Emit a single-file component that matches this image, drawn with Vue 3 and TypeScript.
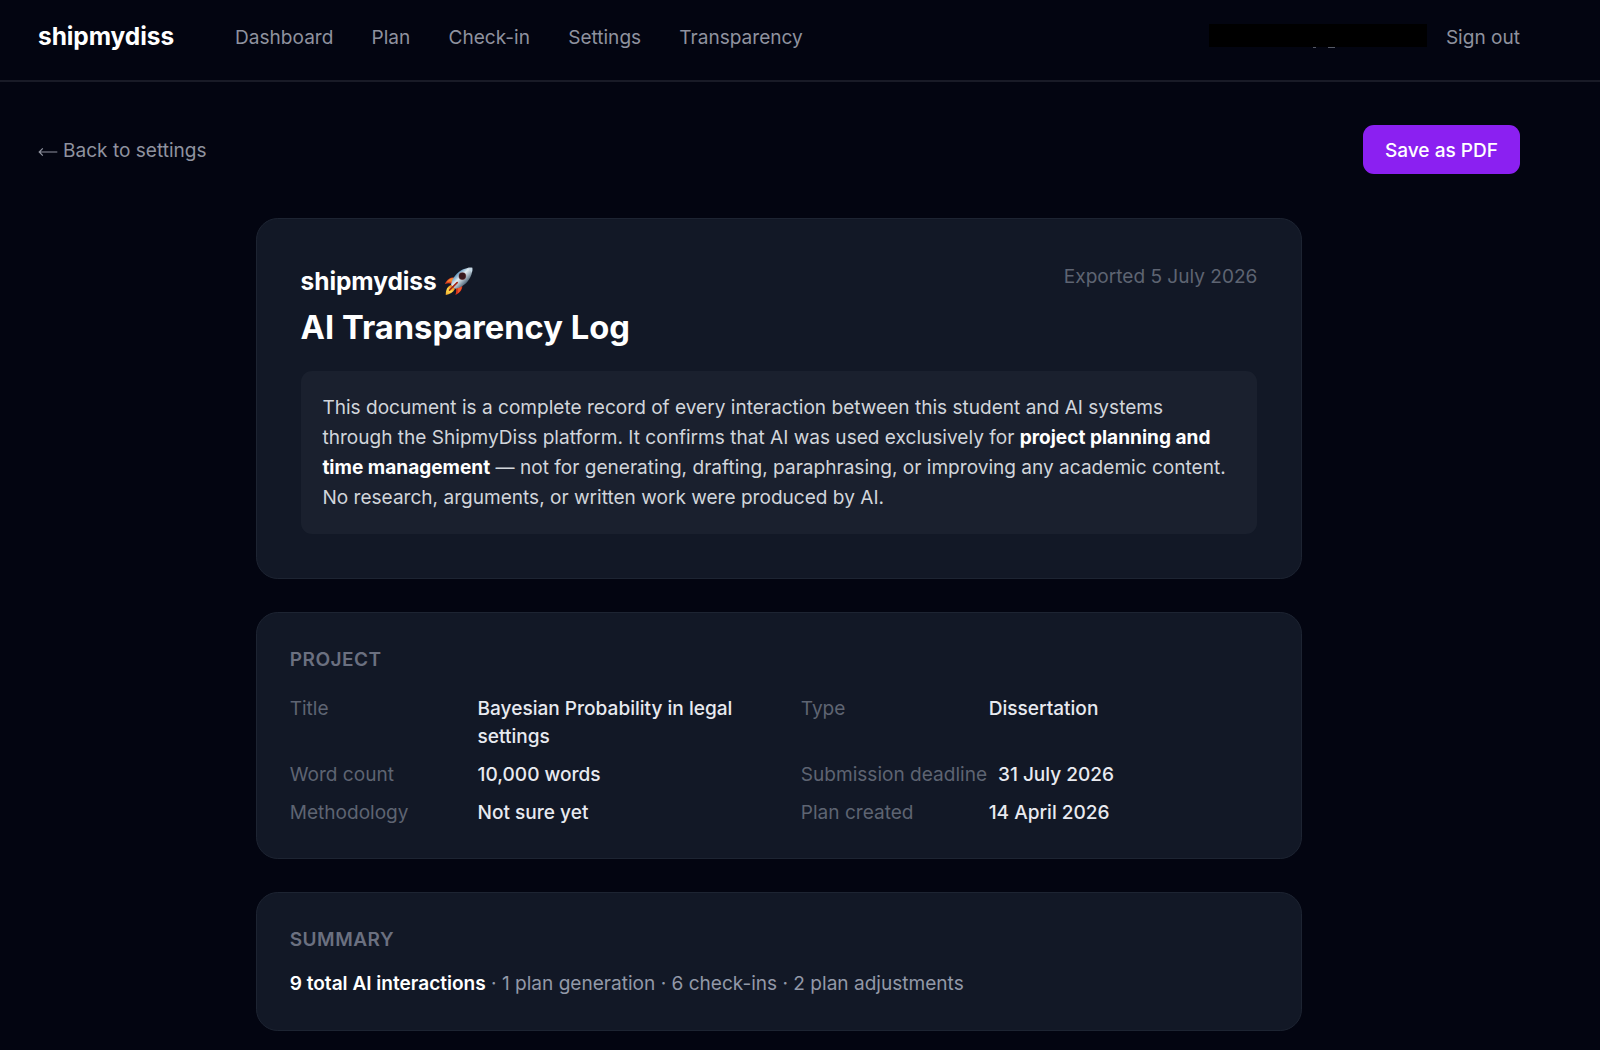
<script setup lang="ts">
interface Detail {
  label: string
  value: string
}

const navItems: string[] = ['Dashboard', 'Plan', 'Check-in', 'Settings', 'Transparency']

const details: Detail[] = [
  { label: 'Title', value: 'Bayesian Probability in legal settings' },
  { label: 'Type', value: 'Dissertation' },
  { label: 'Word count', value: '10,000 words' },
  { label: 'Submission deadline', value: '31 July 2026' },
  { label: 'Methodology', value: 'Not sure yet' },
  { label: 'Plan created', value: '14 April 2026' },
]
</script>

<template>
  <div class="page">
    <header class="topbar">
      <div class="topbar-inner">
        <a class="brand">shipmydiss</a>
        <nav class="nav">
          <a v-for="item in navItems" :key="item" class="nav-link">{{ item }}</a>
        </nav>
        <div class="account">
          <span class="redacted"><i class="tail tail-y"></i><i class="tail tail-g"></i></span>
          <a class="nav-link">Sign out</a>
        </div>
      </div>
    </header>

    <main class="content">
      <div class="toolbar">
        <a class="back">
          <svg class="arrow" viewBox="0 0 20 12" fill="none" stroke="currentColor" stroke-width="1.2">
            <path d="M19.300 6H1.400M4.800 2.400 1.200 6l3.600 3.600" />
          </svg>
          <span>Back to settings</span>
        </a>
        <button class="save" type="button">Save as PDF</button>
      </div>

      <div class="sheet">
        <section class="card intro">
          <div class="intro-head">
            <div class="titles">
              <div class="doc-brand">
                <span>shipmydiss</span>
                <svg class="rocket" viewBox="0 0 30 30">
                  <defs>
                    <linearGradient id="hull" x1="11" y1="9" x2="21" y2="19" gradientUnits="userSpaceOnUse">
                      <stop offset="0" stop-color="#5b93bd" />
                      <stop offset=".38" stop-color="#e4edf2" />
                      <stop offset=".65" stop-color="#a8b8c4" />
                      <stop offset="1" stop-color="#4c6274" />
                    </linearGradient>
                    <linearGradient id="flame" x1="8" y1="20" x2="2" y2="29" gradientUnits="userSpaceOnUse">
                      <stop offset="0" stop-color="#f58a1f" />
                      <stop offset=".45" stop-color="#ffe04a" />
                      <stop offset="1" stop-color="#f0a02c" />
                    </linearGradient>
                  </defs>
                  <path d="M12 11.2C7.500 10.300 4 11.800.9 17.600c3.200-1.300 5.300-1 8.300.2z" fill="#e2431f" />
                  <path d="M10.500 11.300C7.500 11 5 12.500 2.800 15.600c2-.9 4-.7 6 0z" fill="#f58a32" />
                  <path d="M18.700 18c1 4.500-1.600 8.300-6.900 11 1.200-3.200 1-5.800.2-8z" fill="#d9351c" />
                  <path d="M18 20.500c.2 2.800-1.500 5.200-4 7 .7-2 .8-4 .3-5.800z" fill="#f0592b" />
                  <path d="M7.400 18.500c-3.600 1-5.700 4.800-5.600 10.400 4-.8 7.800-2.800 9.600-6.500z" fill="url(#flame)" />
                  <path d="M7.300 18.600c1-6.800 6-13.200 12.500-16.200C23 .9 26 .5 29.200.8c.3 3.300-.2 6-1.700 9.200-3.100 6.500-9.400 11.700-16.100 12.500z" fill="url(#hull)" />
                  <path d="M24.200 1.100c1.700-.4 3.300-.4 5-.3.200 1.800.1 3.300-.3 5z" fill="#c5d8e5" />
                  <circle cx="19" cy="9.400" r="4" fill="#8c6f72" />
                  <circle cx="19" cy="9.400" r="3.500" fill="#38171c" />
                  <path d="M13.600 16.200 5.700 24" stroke="#a32818" stroke-width="1.700" stroke-linecap="round" />
                </svg>
              </div>
              <h1>AI Transparency Log</h1>
            </div>
            <p class="exported">Exported 5 July 2026</p>
          </div>
          <p class="statement">
            This document is a complete record of every interaction between this student and AI systems
            through the ShipmyDiss platform. It confirms that AI was used exclusively for
            <strong>project planning and time management</strong> — not for generating, drafting,
            paraphrasing, or improving any academic content. No research, arguments, or written work were
            produced by AI.
          </p>
        </section>

        <section class="card project">
          <h2>Project</h2>
          <dl class="details">
            <div v-for="item in details" :key="item.label" class="detail">
              <dt>{{ item.label }}</dt>
              <dd>{{ item.value }}</dd>
            </div>
          </dl>
        </section>

        <section class="card summary">
          <h2>Summary</h2>
          <p class="totals">
            <strong>9 total AI interactions</strong> · 1 plan generation · 6 check-ins · 2 plan adjustments
          </p>
        </section>
      </div>
    </main>
  </div>
</template>

<style>
body {
  background: #030511;
}
</style>

<style scoped>
* {
  box-sizing: border-box;
}

.page {
  height: 1050px;
  overflow: hidden;
  background: #030511;
  color: #fff;
  font-family: Inter, 'Liberation Sans', sans-serif;
  font-size: 19.07px;
  line-height: 27.24px;
}

h1,
h2,
p,
dl,
dd {
  margin: 0;
}

.topbar {
  height: 82px;
  border-bottom: 2px solid #191b27;
}

.topbar-inner,
.content {
  margin-left: 38px;
  width: 1482px;
}

.topbar-inner {
  display: flex;
  align-items: center;
  height: 74px;
}

.brand {
  font-size: 24.5px;
  font-weight: 700;
  letter-spacing: -0.08px;
}

.nav {
  display: flex;
  gap: 38.2px;
  margin-left: 61px;
}

.nav-link,
.back {
  color: #8f929f;
}

.nav-link {
  padding-top: 2px;
}

.account {
  display: flex;
  align-items: center;
  gap: 19px;
  margin-left: auto;
}

.redacted {
  position: relative;
  width: 218px;
  height: 23px;
  margin-top: -3px;
  background: #000;
}

.tail {
  position: absolute;
  top: 23px;
  height: 1px;
  background: #555966;
}

.tail-y {
  left: 104px;
  width: 3px;
}

.tail-g {
  left: 119px;
  width: 7px;
}

.toolbar {
  display: flex;
  align-items: center;
  justify-content: space-between;
  margin-top: 43px;
}

.back {
  display: flex;
  align-items: center;
  gap: 5px;
  padding-top: 2px;
}

.arrow {
  width: 20px;
  height: 12px;
  margin-top: 3px;
}

.save {
  width: 157px;
  height: 49px;
  padding: 2px 0 0;
  border: 0;
  border-radius: 10.9px;
  background: #8b20f1;
  color: #fff;
  font: inherit;
  font-weight: 500;
}

.sheet {
  display: flex;
  flex-direction: column;
  gap: 33px;
  width: 1046px;
  margin: 44px auto 0;
}

.card {
  padding: 33px 32.7px;
  border: 1.36px solid #1d2432;
  border-radius: 21.8px;
  background: #121826;
}

.intro {
  height: 361px;
  padding: 43.6px;
}

.project {
  height: 247px;
}

.summary {
  height: 139px;
}

.intro-head {
  display: flex;
  justify-content: space-between;
}

.doc-brand {
  display: flex;
  align-items: center;
  gap: 7px;
  height: 38px;
  font-size: 24.5px;
  font-weight: 700;
  letter-spacing: -0.08px;
}

.rocket {
  width: 29px;
  height: 29px;
}

h1 {
  margin-top: 4px;
  font-size: 32.7px;
  line-height: 44px;
  font-weight: 700;
}

.exported {
  color: #5e6472;
}

.statement {
  margin-top: 22px;
  padding: 22.6px 21.8px 21px;
  border-radius: 10.9px;
  background: #1a202e;
  color: #d1d5db;
  line-height: 30px;
}

.statement strong {
  color: #fff;
  font-weight: 700;
}

h2 {
  color: #6b7080;
  font-size: 19.07px;
  line-height: 27.24px;
  font-weight: 600;
  letter-spacing: 0.48px;
  text-transform: uppercase;
}

.details {
  display: grid;
  grid-template-columns: 1fr 1fr;
  column-gap: 43.6px;
  row-gap: 10.9px;
  margin-top: 21.8px;
}

.detail {
  display: flex;
  gap: 10.9px;
  line-height: 27.5px;
}

dt {
  flex: none;
  min-width: 177px;
  color: #5e6472;
}

dd {
  color: #e8eaf0;
  font-weight: 500;
}

.totals {
  margin-top: 16.5px;
  color: #9299a8;
}

.totals strong {
  color: #fff;
  font-weight: 600;
}
</style>
